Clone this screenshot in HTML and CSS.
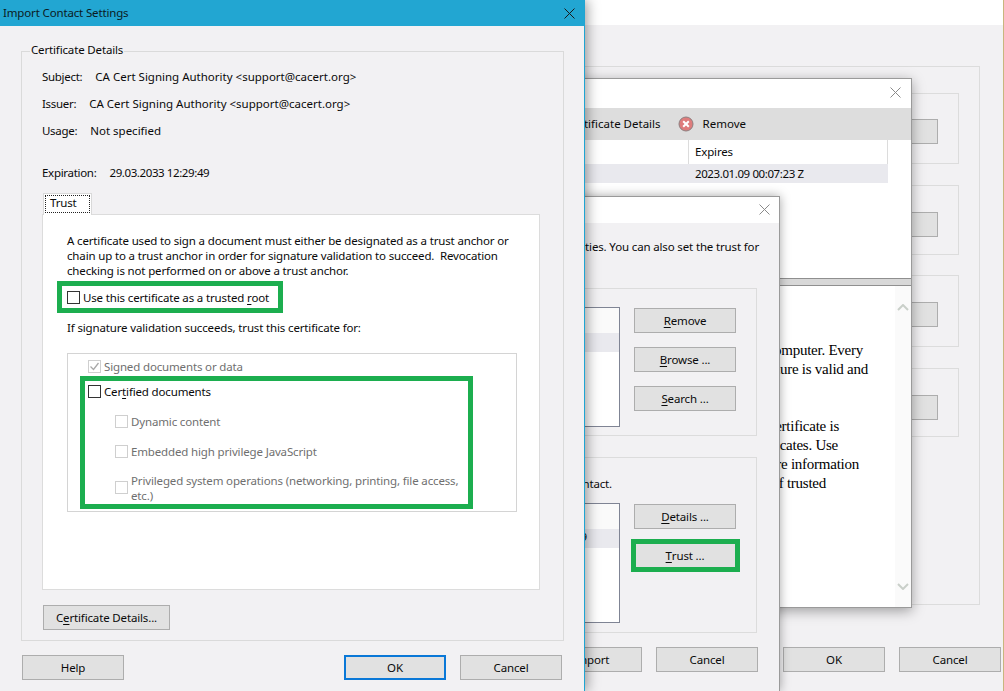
FILE: index.html
```html
<!DOCTYPE html>
<html lang="en">
<head>
<meta charset="utf-8">
<title>Import Contact Settings</title>
<link rel="stylesheet" href="styles.css">
</head>
<body>
<div class="desktop">

  <section class="win win-back">
    <div class="back-top"></div>
    <div class="back-frame">
      <div class="slot slot-a"><span class="btn slot-btn"></span></div>
      <div class="slot slot-b"><span class="btn slot-btn"></span></div>
      <div class="slot slot-c"><span class="btn slot-btn"></span></div>
      <div class="slot slot-d"><span class="btn slot-btn"></span></div>
    </div>
    <div class="back-foot">
      <button class="btn">OK</button>
      <button class="btn">Cancel</button>
    </div>
  </section>

  <section class="win win-list">
    <header class="plain-title">
      <svg class="x x-gray" viewBox="0 0 11 11"><path d="M.5.5l10 10M10.5.5l-10 10"/></svg>
    </header>
    <div class="toolbar">
      <span class="tool-text">Certificate Details</span>
      <svg class="rm-icon" viewBox="0 0 16 16"><circle cx="8" cy="8" r="7" fill="#de7c7c" stroke="#8d7f80"/><path d="M5.2 5.2l5.6 5.6M10.8 5.2l-5.6 5.6" stroke="#fff" stroke-width="2"/></svg>
      <span>Remove</span>
    </div>
    <div class="tbl-row tbl-head"><div class="tbl-cell">Expires</div></div>
    <div class="tbl-row tbl-sel"><div class="tbl-cell date">2023.01.09 00:07:23 Z</div></div>
    <div class="splitter"></div>
    <div class="doc">
      <div class="doc-text">
        <p class="dl dl-1">computer. Every</p>
        <p class="dl dl-2">signature is valid and</p>
        <p class="dl dl-3 dl-gap">certificate is</p>
        <p class="dl dl-4">certificates. Use</p>
        <p class="dl dl-5">more information</p>
        <p class="dl dl-6">of trusted</p>
      </div>
      <div class="scroll">
        <svg class="chev" viewBox="0 0 12 7"><path d="M1 6l5-5 5 5"/></svg>
        <svg class="chev" viewBox="0 0 12 7"><path d="M1 1l5 5 5-5"/></svg>
      </div>
    </div>
  </section>

  <section class="win win-contact">
    <header class="plain-title small">
      <svg class="x x-gray" viewBox="0 0 11 11"><path d="M.5.5l10 10M10.5.5l-10 10"/></svg>
    </header>
    <p class="contact-intro">properties. You can also set the trust for</p>
    <div class="cgroup cgroup-a">
      <div class="clist">
        <div class="crow-top"></div>
        <div class="crow-sel"></div>
      </div>
      <div class="ccol">
        <button class="btn"><u>R</u>emove</button>
        <button class="btn"><u>B</u>rowse ...</button>
        <button class="btn"><u>S</u>earch ...</button>
      </div>
    </div>
    <div class="cgroup cgroup-b">
      <p class="cgroup-note">this contact.</p>
      <div class="cgroup-body">
        <div class="clist">
          <div class="crow-top"></div>
          <div class="crow-sel crow-clip">2023.01.09</div>
        </div>
        <div class="ccol">
          <button class="btn"><u>D</u>etails ...</button>
          <button class="btn btn-marked"><u>T</u>rust ...</button>
        </div>
      </div>
    </div>
    <div class="contact-foot">
      <button class="btn"><span>Import</span></button>
      <button class="btn">Cancel</button>
    </div>
  </section>

  <section class="win win-main">
    <header class="main-title">
      <span>Import Contact Settings</span>
      <svg class="x" viewBox="0 0 11 11"><path d="M.5.5l10 10M10.5.5l-10 10"/></svg>
    </header>
    <fieldset class="details">
      <legend>Certificate Details</legend>
      <div class="info info-first"><span class="info-label">Subject:</span><span>CA Cert Signing Authority &lt;support@cacert.org&gt;</span></div>
      <div class="info info-next"><span class="info-label">Issuer:</span><span>CA Cert Signing Authority &lt;support@cacert.org&gt;</span></div>
      <div class="info info-next"><span class="info-label">Usage:</span><span>Not specified</span></div>
      <div class="info info-exp"><span class="info-label">Expiration:</span><span class="date">29.03.2033 12:29:49</span></div>

      <div class="tabs"><div class="tab"><span class="tab-focus">Trust</span></div></div>
      <div class="pane">
        <p class="para">A certificate used to sign a document must either be designated as a trust anchor or<br>chain up to a trust anchor in order for signature validation to succeed.&nbsp; Revocation<br>checking is not performed on or above a trust anchor.</p>
        <div class="mark mark-root">
          <label class="check"><span class="cb"></span><span>Use this certificate as a trusted <u>r</u>oot</span></label>
        </div>
        <p class="if-line">If signature validation succeeds, trust this certificate for:</p>
        <div class="perms">
          <div class="check check-off signed">
            <span class="cb cb-off"><svg viewBox="0 0 13 13"><path d="M2.5 6.5l3 3 5-6.5"/></svg></span><span>Signed documents or data</span>
          </div>
          <div class="mark mark-cert">
            <label class="check cert"><span class="cb"></span><span>Cer<u>t</u>ified documents</span></label>
            <div class="check check-off sub sub-a"><span class="cb cb-off"></span><span>Dynamic content</span></div>
            <div class="check check-off sub sub-b"><span class="cb cb-off"></span><span>Embedded high privilege JavaScript</span></div>
            <div class="check check-off sub sub-c"><span class="cb cb-off"></span><span>Privileged system operations (networking, printing, file access,<br>etc.)</span></div>
          </div>
        </div>
      </div>
      <button class="btn btn-details">C<u>e</u>rtificate Details...</button>
    </fieldset>
    <footer class="main-foot">
      <button class="btn">Help</button>
      <span class="foot-gap"></span>
      <button class="btn btn-default">OK</button>
      <button class="btn">Cancel</button>
    </footer>
  </section>

</div>
</body>
</html>
```
FILE: styles.css
```css
* { box-sizing: border-box; }
html, body { margin: 0; padding: 0; }
body {
  width: 1004px; height: 691px; overflow: hidden;
  font: 11.5px/16px "Noto Sans", "Open Sans", sans-serif;
  letter-spacing: -.15px;
  color: #0a0a0a; background: #f0f0f0;
}
p { margin: 0; }
u { text-decoration-thickness: 1px; text-underline-offset: 2px; }

.desktop { position: relative; width: 1004px; height: 691px; overflow: hidden; }
.win { position: absolute; overflow: hidden; background: #f2f1f3; }

.btn {
  display: flex; align-items: center; justify-content: center;
  flex: none; width: 102px; height: 25px; padding: 0;
  font: inherit; letter-spacing: inherit; color: #0a0a0a;
  background: #e1e1e1; border: 1px solid #adadad;
}

.x { width: 11px; height: 11px; display: block; }
.x path { fill: none; stroke: #1a1a1a; stroke-width: 1; }
.x-gray path { stroke: #8a8a8a; }
.date { letter-spacing: -.4px; }

/* back window: runs under the dialogs in front of it */
.win-back { left: 484px; top: 0; width: 520px; height: 691px; border-right: 1px solid #c8b67e; }
.back-top { height: 25px; background: #fff; }
.back-frame {
  margin: 41px 23px 0 0; height: 539px; padding: 26px 20px 0 0;
  display: flex; flex-direction: column;
  border: 1px solid #dcdcdc;
}
.slot {
  display: flex; justify-content: flex-end; padding: 26px 20px 0 0; flex: none;
  border: 1px solid #dcdcdc;
}
.slot-a { height: 71px; padding-top: 25px; }
.slot-b { height: 70px; margin-top: 21px; }
.slot-c { height: 72px; margin-top: 20px; }
.slot-d { height: 69px; margin-top: 21px; }
.back-foot { display: flex; justify-content: flex-end; gap: 14px; margin: 42px 2px 0 0; }

/* certificate list window */
.win-list {
  left: 484px; top: 78px; width: 428px; height: 530px;
  background: #fff; border: 1px solid #9a9a9a;
  box-shadow: 0 3px 12px rgba(0,0,0,.35);
  display: flex; flex-direction: column;
}
.plain-title { height: 29px; flex: none; background: #fff; display: flex; justify-content: flex-end; align-items: flex-start; padding: 8px 10px 0 0; }
.plain-title.small { height: 26px; padding: 7px 9px 0 0; }
.toolbar {
  height: 32px; flex: none; background: #dddddd;
  display: flex; align-items: center; justify-content: flex-end;
  padding-right: 165px; white-space: nowrap; letter-spacing: 0;
}
.tool-text { margin-right: 17px; }
.rm-icon { width: 16px; height: 16px; margin-right: 9px; flex: none; }
.tbl-row { width: 403px; display: flex; justify-content: flex-end; flex: none; }
.tbl-head { height: 24px; background: #fff; }
.tbl-sel { height: 19px; background: #e9e9ee; }
.tbl-cell { width: 200px; padding-left: 7px; display: flex; align-items: center; }
.tbl-head .tbl-cell { border-left: 1px solid #dcdcdc; border-right: 1px solid #dcdcdc; padding-left: 6px; }
.splitter {
  margin-top: 95px; height: 8px; flex: none; background: #d8d8d8;
  border-top: 1px solid #8f8f8f; border-bottom: 1px solid #8f8f8f;
}
.doc { flex: 1; display: flex; background: #fff; min-height: 0; }
.doc-text { flex: 1; padding-top: 55px; font: 15px/19px "Liberation Serif", serif; letter-spacing: -.25px; color: #000; white-space: nowrap; min-width: 0; }
.dl { text-align: right; }
.dl-gap { margin-top: 38px; }
.dl-1 { padding-right: 32px; }
.dl-2 { padding-right: 27px; }
.dl-3 { padding-right: 56px; }
.dl-4 { padding-right: 57px; }
.dl-5 { padding-right: 36px; }
.dl-6 { padding-right: 69px; }
.scroll { width: 16px; flex: none; background: #fafafa; display: flex; flex-direction: column; justify-content: space-between; align-items: center; padding: 18px 0 17px; }
.chev { width: 12px; height: 7px; display: block; }
.chev path { fill: none; stroke: #c9cfc9; stroke-width: 2; }

/* contact window */
.win-contact {
  left: 484px; top: 196px; width: 296px; height: 495px;
  border: 1px solid #9a9a9a; border-bottom: 0;
  box-shadow: 0 0 10px rgba(0,0,0,.35);
  display: flex; flex-direction: column;
}
.contact-intro { margin-top: 16px; padding-right: 20px; display: flex; justify-content: flex-end; white-space: nowrap; flex: none; }
.cgroup { margin: 0 22px 0 0; flex: none; border: 1px solid #dcdcdc; }
.cgroup-a { margin-top: 33px; height: 148px; padding: 18px 20px 0 0; display: flex; gap: 14px; }
.cgroup-b { margin-top: 21px; height: 176px; padding: 18px 20px 0 0; }
.cgroup-note { display: flex; justify-content: flex-end; white-space: nowrap; padding-right: 124px; height: 16px; }
.cgroup-body { display: flex; gap: 14px; margin-top: 11px; }
.clist { flex: 1; height: 120px; min-width: 0; background: #fff; border: 1px solid #7f8494; overflow: hidden; }
.crow-top { height: 25px; background: #fafafa; }
.crow-sel { height: 19px; background: #e9e9ee; }
.crow-clip { display: flex; justify-content: flex-end; white-space: nowrap; padding-right: 32px; }
.ccol { display: flex; flex-direction: column; gap: 14px; padding-top: 1px; }
.btn-marked { position: relative; }
.btn-marked::after {
  content: ""; position: absolute; left: -4px; right: -5px; top: -5px; bottom: -5px;
  border: 5px solid #1cae4f;
}
.contact-foot { display: flex; gap: 14px; justify-content: flex-end; margin: 14px 21px 0 0; }

/* main window */
.win-main {
  left: 0; top: 0; width: 585px; height: 691px;
  border-right: 1px solid #1fa5d2;
  box-shadow: 2px 0 12px rgba(0,0,0,.4);
}
.main-title {
  height: 26px; background: #22a6d2; color: #0b1a22;
  display: flex; align-items: center; justify-content: space-between;
  padding: 0 9px 0 3px;
}
.details {
  margin: 17px 20px 0 21px; padding: 0; min-width: 0; height: 598px;
  border: 1px solid #dadada;
}
.details legend { margin-left: 8px; padding: 0 1px; line-height: 14px; height: 16px; }
.info { display: flex; gap: 13px; padding-left: 20px; white-space: nowrap; letter-spacing: 0; }
.info-label { letter-spacing: -.3px; }
.info-first { margin-top: 10px; }
.info-next { margin-top: 11px; }
.info-exp { margin-top: 26px; }

.tabs { margin: 12px 0 0 21px; height: 21px; display: flex; position: relative; z-index: 1; }
.tab { width: 49px; height: 22px; background: #fff; border: 1px solid #d9d9d9; border-bottom: 0; padding: 1px 1px 2px 1px; }
.tab-focus { display: block; height: 18px; line-height: 14px; border: 1px dotted #222; padding-left: 4px; }
.pane {
  margin-left: 20px; width: 498px; height: 376px; background: #fff;
  border: 1px solid #dcdcdc; padding: 18px 0 0 24px;
}
.para { line-height: 15px; white-space: nowrap; }
.mark { border: 5px solid #1cae4f; background: #fff; }
.mark-root { margin: 3px 0 0 -10px; width: 226px; height: 32px; display: flex; align-items: center; padding-left: 5px; }
.check { display: flex; align-items: center; gap: 3px; white-space: nowrap; }
.check > span:last-child { transform: translateY(1px); }
.cb { width: 13px; height: 13px; flex: none; background: #fff; border: 1px solid #333; display: block; }
.cb svg { width: 13px; height: 13px; display: block; margin: -1px; }
.cb svg path { fill: none; stroke: #a8a8a8; stroke-width: 1.3; }
.cb-off { border-color: #cfcfcf; }
.check-off { color: #6f6f6f; }
.if-line { margin-top: 7px; white-space: nowrap; }
.perms { margin-top: 17px; width: 450px; height: 159px; border: 1px solid #d4d4d4; padding: 4px 0 0 12px; }
.signed { padding-left: 8px; height: 16px; margin-bottom: 2px; }
.mark-cert { width: 393px; height: 133px; padding: 2px 0 0 3px; }
.cert { height: 16px; }
.sub { padding-left: 27px; }
.sub-a { margin-top: 14px; }
.sub-b { margin-top: 14px; }
.sub-c { margin-top: 13px; line-height: 15px; }
.btn-details { width: 127px; margin: 15px 0 0 21px; }

.main-foot { display: flex; gap: 14px; margin: 14px 22px 0 22px; }
.foot-gap { flex: 1; }
.btn-default { border: 2px solid #0a78d7; }
```
